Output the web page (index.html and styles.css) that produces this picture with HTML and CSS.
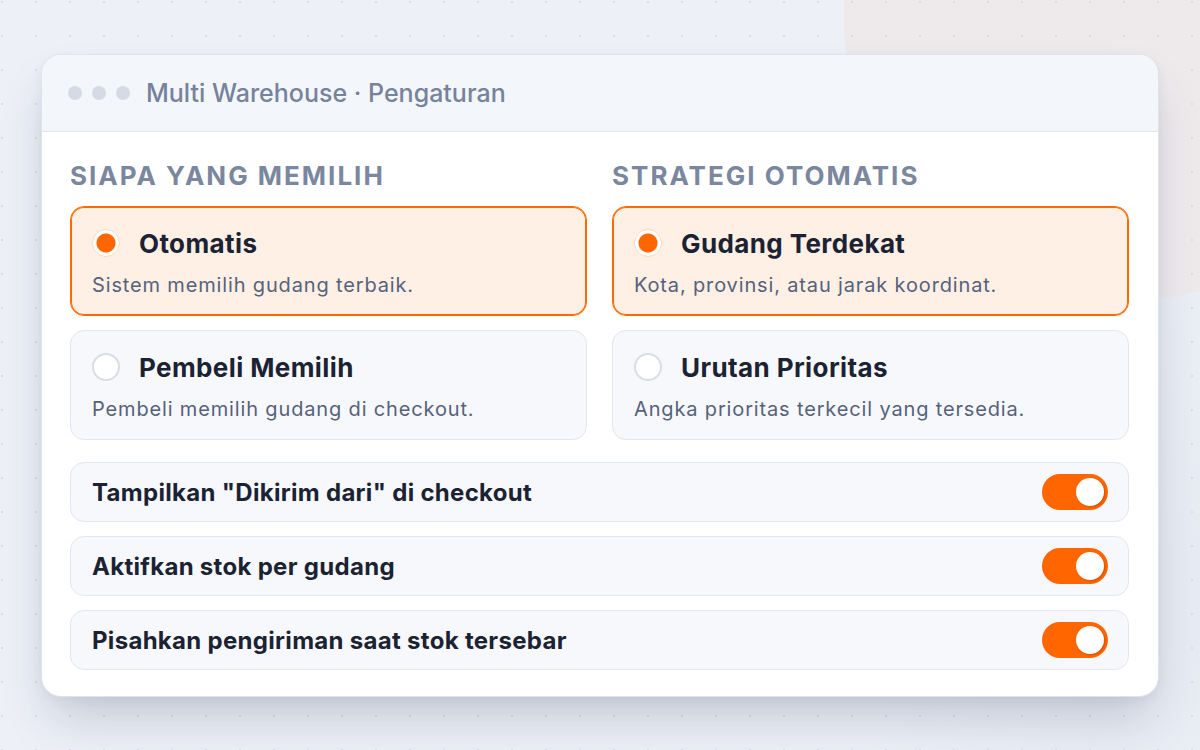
FILE: index.html
```html
<!DOCTYPE html>
<html>
<head>
  <meta charset="UTF-8">
  <title>Multi Warehouse · Pengaturan</title>
  <link rel="stylesheet" href="styles.css">
</head>
<body>
  <div class="window">
    <div class="titlebar">
      <span class="dot"></span>
      <span class="dot"></span>
      <span class="dot"></span>
      <span class="title">Multi Warehouse · Pengaturan</span>
    </div>

    <div class="content">
      <div class="columns">
        <!-- who picks the warehouse -->
        <div class="group">
          <h3 class="label">SIAPA YANG MEMILIH</h3>
          <div class="option selected">
            <div class="option-head">
              <span class="radio"></span>
              <span class="option-title">Otomatis</span>
            </div>
            <p class="option-desc">Sistem memilih gudang terbaik.</p>
          </div>
          <div class="option">
            <div class="option-head">
              <span class="radio"></span>
              <span class="option-title">Pembeli Memilih</span>
            </div>
            <p class="option-desc">Pembeli memilih gudang di checkout.</p>
          </div>
        </div>

        <!-- automatic strategy -->
        <div class="group">
          <h3 class="label">STRATEGI OTOMATIS</h3>
          <div class="option selected">
            <div class="option-head">
              <span class="radio"></span>
              <span class="option-title">Gudang Terdekat</span>
            </div>
            <p class="option-desc">Kota, provinsi, atau jarak koordinat.</p>
          </div>
          <div class="option">
            <div class="option-head">
              <span class="radio"></span>
              <span class="option-title">Urutan Prioritas</span>
            </div>
            <p class="option-desc">Angka prioritas terkecil yang tersedia.</p>
          </div>
        </div>
      </div>

      <div class="toggles">
        <div class="row">
          <span>Tampilkan "Dikirim dari" di checkout</span>
          <span class="switch on"></span>
        </div>
        <div class="row">
          <span>Aktifkan stok per gudang</span>
          <span class="switch on"></span>
        </div>
        <div class="row">
          <span>Pisahkan pengiriman saat stok tersebar</span>
          <span class="switch on"></span>
        </div>
      </div>
    </div>
  </div>
</body>
</html>
```

FILE: styles.css
```css
* {
  box-sizing: border-box;
}

html, body {
  height: 100%;
}

body {
  margin: 0;
  display: flex;
  align-items: center;
  justify-content: center;
  font-family: "Inter", "Noto Sans", sans-serif;
  background-color: #edf0f7;
  background-image:
    radial-gradient(circle at 1px 1px, #d8dde7 1.2px, transparent 1.6px),
    radial-gradient(circle 285px at 1128px 16px, #eeeaec 99.5%, transparent 100%),
    radial-gradient(circle 420px at 1250px 600px, #e6eaf2 0%, transparent 100%);
  background-size: 34px 34px, 100% 100%, 100% 100%;
  background-position: 1px 1px, 0 0, 0 0;
}

.window {
  width: 1118px;
  background: #fff;
  border: 1px solid #dfe3ea;
  border-radius: 20px;
  overflow: hidden;
  box-shadow: 0 28px 50px -10px rgba(40, 52, 84, 0.22), 0 4px 12px rgba(40, 52, 84, 0.05);
}

.titlebar {
  height: 77px;
  display: flex;
  align-items: center;
  padding-left: 26px;
  background: #f3f6fb;
  border-bottom: 1px solid #dfe3ea;
}

.dot {
  width: 14px;
  height: 14px;
  border-radius: 50%;
  background: #d5dae4;
  margin-right: 10px;
}

.title {
  margin-left: 6px;
  font-size: 25px;
  font-weight: 500;
  color: #76839a;
}

.content {
  padding: 28px 29px 26px 28px;
}

.columns {
  display: grid;
  grid-template-columns: 1fr 1fr;
  gap: 25px;
}

.group {
  display: flex;
  flex-direction: column;
  gap: 14px;
}

.label {
  margin: 0 0 1px;
  font-size: 26px;
  line-height: 31px;
  font-weight: 700;
  letter-spacing: 2px;
  color: #7a879e;
}

.option {
  height: 110px;
  padding: 21px 20px 19px 21px;
  background: #f7f8fc;
  border: 1px solid #e2e6ed;
  border-radius: 14px;
}

.option.selected {
  background: #fff0e6;
  border-color: #ff6a00;
  box-shadow: inset 0 0 0 1px #ff6a00;
}

.option-head {
  display: flex;
  align-items: center;
  gap: 19px;
}

.radio {
  width: 28px;
  height: 28px;
  border-radius: 50%;
  background: #fff;
  border: 2px solid #d9dde4;
  flex: none;
}

.selected .radio {
  border: 1px solid #ffd9bf;
  background: radial-gradient(circle, #ff6600 9px, #fff 10px);
}

.option-title {
  font-size: 26px;
  font-weight: 700;
  color: #1b2333;
  letter-spacing: 0.4px;
}

.option-desc {
  margin: 13px 0 0;
  font-size: 20px;
  line-height: 26px;
  color: #56627a;
  letter-spacing: 0.85px;
}

.toggles {
  display: flex;
  flex-direction: column;
  gap: 14px;
  margin-top: 22px;
}

.row {
  height: 60px;
  display: flex;
  align-items: center;
  justify-content: space-between;
  padding: 0 20px 0 21px;
  background: #f7f8fc;
  border: 1px solid #e2e6ed;
  border-radius: 14px;
  font-size: 24px;
  font-weight: 700;
  color: #1b2333;
  letter-spacing: 0.3px;
}

.row span:first-child {
  margin-top: 2px;
}

.switch {
  position: relative;
  width: 66px;
  height: 36px;
  border-radius: 18px;
  background: #d5dae4;
}

.switch.on {
  background: #ff6600;
}

/* knob sits on the right when the switch is on */
.switch::after {
  content: "";
  position: absolute;
  top: 4px;
  left: 4px;
  width: 28px;
  height: 28px;
  border-radius: 50%;
  background: #fff;
  box-shadow: 1px 1px 2px rgba(120, 40, 0, 0.35);
}

.switch.on::after {
  left: 34px;
}
```
